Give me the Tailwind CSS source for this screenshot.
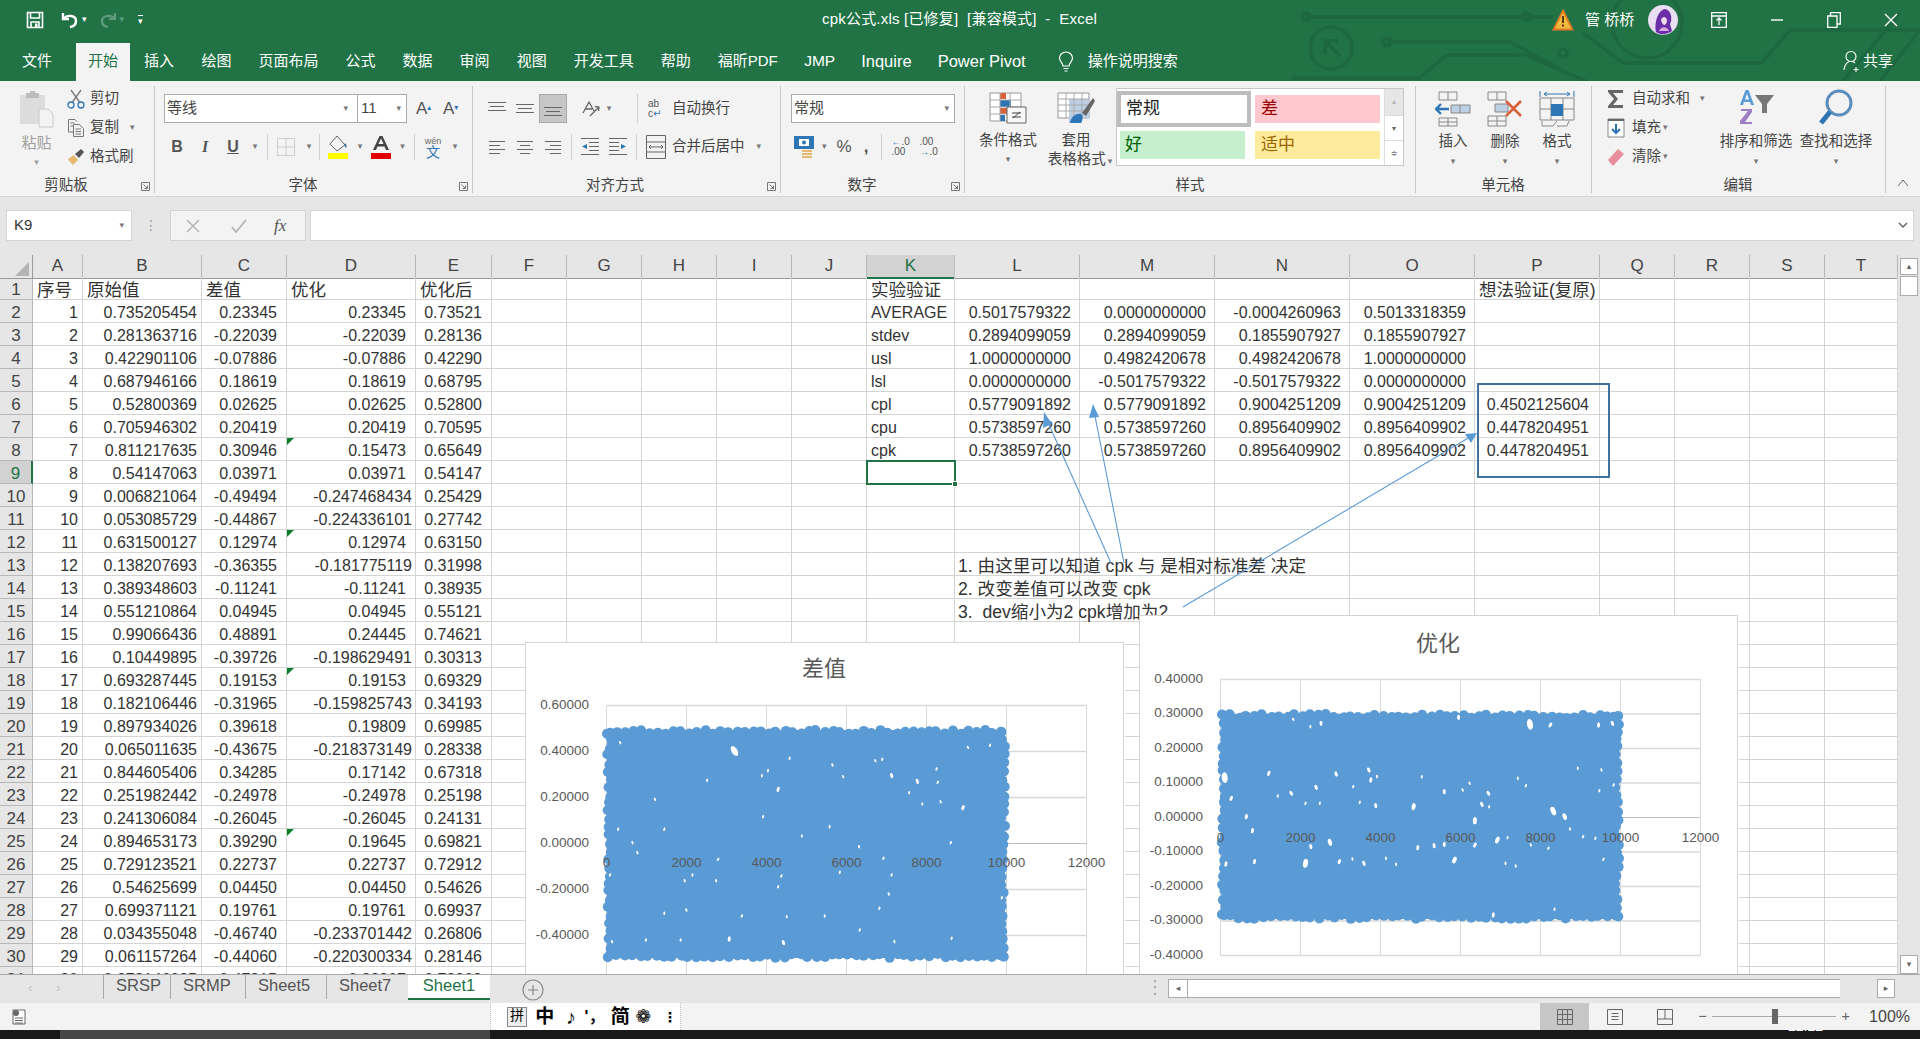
<!DOCTYPE html>
<html lang="zh">
<head>
<meta charset="utf-8"/>
<title>cpk公式.xls - Excel</title>
<script src="https://cdn.jsdelivr.net/npm/@tailwindcss/browser@4"></script>
</head>
<body class="w-[1920px] h-[1039px] overflow-hidden flex flex-col bg-[#e6e6e6] text-[#333] text-[14.5px] font-['Liberation_Sans','Noto_Sans_CJK_SC','DejaVu_Sans',sans-serif]">

<!-- title bar + tabs -->
<header class="relative h-[81px] shrink-0 bg-[#217346] text-white flex flex-col">
  <svg class="absolute inset-0" width="1920" height="81" fill="none" stroke="#1d6840" stroke-width="3.5">
    <path d="M1306 17H1553M1387 42H1510L1562 70M1582 32L1623 63H1762L1790 30H1920M1292 78H1419L1447 55H1525L1586 81M1843 81L1900 13M1880 81L1920 30"/>
    <circle cx="1306" cy="17" r="4"/><circle cx="1527" cy="17" r="4"/><circle cx="1387" cy="42" r="4"/><circle cx="1563" cy="53" r="4"/>
    <circle cx="1331" cy="48" r="21"/><path d="M1325 54V41H1338M1325 41L1340 56"/>
    <circle cx="1647" cy="23" r="35"/>
  </svg>
  <div class="relative h-[40px] flex items-center">
    <div class="flex items-center pl-[26px]">
      <svg width="18" height="18" viewBox="0 0 18 18" fill="none" stroke="#fff" stroke-width="1.6"><path d="M1.5 1.5H16.5V16.5H1.5ZM4.5 1.5V7H13.5V1.5M5 16.5V11H13V16.5"/><path d="M9 12.5H11.5V16H9Z" fill="#fff" stroke="none"/></svg>
      <svg class="ml-[17px]" width="18" height="18" viewBox="0 0 18 18" fill="none" stroke="#fff" stroke-width="2.4"><path d="M2 2V8H8M3 7.5C6 3.5 15 4 15 10C15 13 13 15.5 9 16"/></svg>
      <span class="ml-[3px] text-[9px]">▾</span>
      <svg class="ml-[12px]" width="18" height="18" viewBox="0 0 18 18" fill="none" stroke="#5f9d7d" stroke-width="2.2"><path d="M16 2V8H10M15 7.5C12 3.5 3 4 3 10C3 13 5 15.5 9 16"/></svg>
      <span class="ml-[3px] text-[9px] text-[#5f9d7d]">▾</span>
      <span class="ml-[14px] text-[9px] leading-[8px] border-t border-white pt-[1px]">▾</span>
    </div>
    <div class="absolute left-[822px] top-[9px] text-[15px] leading-[20px] whitespace-pre tracking-[0.2px]">cpk公式.xls [已修复]  [兼容模式]  -  Excel</div>
    <div class="ml-auto flex items-center">
      <svg width="22" height="22" viewBox="0 0 22 22"><path d="M11 1.5L20.5 20.5H1.5Z" fill="#f2b93f" stroke="#e07b24" stroke-width="1.8"/><path d="M10 7H12V14H10ZM10 15.5H12V17.5H10Z" fill="#5a3a10"/></svg>
      <span class="ml-[11px] w-[52px] text-[15px] whitespace-pre">管 桥桥</span>
      <svg class="ml-[11px]" width="30" height="30" viewBox="0 0 30 30"><circle cx="15" cy="15" r="15" fill="#e9def2"/><path d="M8 27C6 18 10 5 17 4C23 5 25 14 22 19L24 26C18 30 12 30 8 27Z" fill="#6b2fa8"/><path d="M13 15C14 11 18 11 19 15C19 20 15 23 13 15Z" fill="#f1dcea"/><path d="M11 26C13 21 19 21 21 26Z" fill="#d9a9e4"/></svg>
      <svg class="ml-[33px]" width="16" height="16" viewBox="0 0 16 16" fill="none" stroke="#fff" stroke-width="1.3"><path d="M.7 .7H15.3V15.3H.7ZM.7 4H15.3M8 13V6.5M5.5 8.5L8 6L10.5 8.5"/></svg>
      <svg class="ml-[43px]" width="14" height="14" viewBox="0 0 14 14" stroke="#fff" stroke-width="1.4"><path d="M1 7H13"/></svg>
      <svg class="ml-[43px]" width="14" height="16" viewBox="0 0 14 16" fill="none" stroke="#fff" stroke-width="1.3"><path d="M.7 4H10V15.3H.7ZM3.5 4V.7H13.3V12H10"/></svg>
      <svg class="ml-[43px] mr-[22px]" width="14" height="14" viewBox="0 0 14 14" stroke="#fff" stroke-width="1.4"><path d="M1 1L13 13M13 1L1 13"/></svg>
    </div>
  </div>
  <nav class="relative h-[41px] flex items-end text-[15px] pl-[8px]">
    <a class="h-[38px] flex items-center pb-[2px] px-[14px]">文件</a>
    <a class="h-[38px] flex items-center pb-[2px] px-[12px] ml-[10px] bg-[#f3f3f3] text-[#217346]">开始</a>
    <a class="h-[38px] flex items-center pb-[2px] px-[14px]">插入</a>
    <a class="h-[38px] flex items-center pb-[2px] px-[13.5px]">绘图</a>
    <a class="h-[38px] flex items-center pb-[2px] px-[13.5px]">页面布局</a>
    <a class="h-[38px] flex items-center pb-[2px] px-[13.5px]">公式</a>
    <a class="h-[38px] flex items-center pb-[2px] px-[13.5px]">数据</a>
    <a class="h-[38px] flex items-center pb-[2px] px-[13.5px]">审阅</a>
    <a class="h-[38px] flex items-center pb-[2px] px-[13.5px]">视图</a>
    <a class="h-[38px] flex items-center pb-[2px] px-[13.5px]">开发工具</a>
    <a class="h-[38px] flex items-center pb-[2px] px-[13.5px]">帮助</a>
    <a class="h-[38px] flex items-center pb-[2px] px-[13.5px]">福昕PDF</a>
    <a class="h-[38px] flex items-center pb-[2px] px-[13px] text-[15.5px]">JMP</a>
    <a class="h-[38px] flex items-center pb-[2px] px-[13px] text-[16.5px]">Inquire</a>
    <a class="h-[38px] flex items-center pb-[2px] px-[13px] text-[16.5px]">Power Pivot</a>
    <svg class="ml-[19px] mb-[8px]" width="16" height="22" viewBox="0 0 16 22" fill="none" stroke="#fff" stroke-width="1.2"><path d="M5 15C5 12 1.5 10.500 1.500 7C1.500 3.500 4.500 1 8 1C11.500 1 14.500 3.500 14.500 7C14.500 10.500 11 12 11 15ZM5.500 17.500H10.500M6.500 20H9.500"/></svg>
    <a class="h-[38px] flex items-center pb-[2px] ml-[14px]">操作说明搜索</a>
    <div class="ml-auto h-[38px] flex items-center pb-[2px] pr-[27px]">
      <svg width="19" height="22" viewBox="0 0 19 22" fill="none" stroke="#fff" stroke-width="1.1"><circle cx="8" cy="6.500" r="5"/><path d="M1 20C1.500 15 4 12.500 6 11.500M10 11.500L12 13M13 17V22M10.500 19.500H15.500"/></svg>
      <span class="ml-[1px]">共享</span>
    </div>
  </nav>
</header>

<!-- ribbon -->
<section class="h-[116px] shrink-0 bg-[#f3f3f3] border-b border-[#d6d6d6] flex items-start pt-[5px] text-[#444]">

  <!-- clipboard -->
  <div class="w-[155px] h-[107px] border-r border-[#c6c6c6] flex flex-col">
    <div class="h-[93px] flex">
      <div class="w-[67px] pl-[6px] flex flex-col items-center text-[#a0a0a0]">
        <svg class="mt-[4px]" width="36" height="38" viewBox="0 0 36 38"><path d="M1 5H26V34H1Z" fill="#dcdcdc"/><path d="M7 3H20V8H7Z" fill="#bdbdbd"/><path d="M11 1H16V4H11Z" fill="#bdbdbd"/><path d="M20 19H29L34 24V37H20Z" fill="#f3f3f3" stroke="#c8c8c8"/></svg>
        <span class="mt-[5px] text-[15px] leading-[20px]">粘贴</span>
        <span class="mt-[3px] text-[9px]">▾</span>
      </div>
      <div class="flex flex-col -mt-[2px]">
        <div class="h-[29px] flex items-center">
          <svg width="18" height="20" viewBox="0 0 18 20" fill="none" stroke="#777" stroke-width="1.3"><path d="M4 1L12.500 13M14 1L5.500 13"/><circle cx="4" cy="16" r="3" stroke="#2e75b6"/><circle cx="14" cy="16" r="3" stroke="#2e75b6"/></svg>
          <span class="ml-[5px]">剪切</span>
        </div>
        <div class="h-[29px] flex items-center">
          <svg width="18" height="20" viewBox="0 0 18 20" fill="none" stroke="#777"><path d="M1.500 1.500H8L10 3.500M1.500 1.500V14H6M3.500 5H7.500M3.500 8H6M6.500 6.500H12L16.500 10.500V18.500H6.500ZM8.500 11H14M8.500 13.500H14M8.500 16H14"/></svg>
          <span class="ml-[5px]">复制</span>
          <span class="ml-[11px] text-[9px] text-[#777]">▾</span>
        </div>
        <div class="h-[29px] flex items-center">
          <svg width="18" height="18" viewBox="0 0 18 18"><path d="M1 11L7 7L11 12L6 17C4 15 2 13 1 11Z" fill="#e6b96f"/><path d="M8 6L14 1L17 4L12 10Z" fill="#555"/></svg>
          <span class="ml-[5px]">格式刷</span>
        </div>
      </div>
    </div>
    <div class="h-[15px] flex items-center"><span class="w-[132px] text-center">剪贴板</span><svg class="ml-[9px] mt-[2px]" width="9" height="9" viewBox="0 0 9 9" fill="none" stroke="#777"><path d="M.5 8.500V.5H8.500V8.500ZM2.500 2.500L6.500 6.500M6.500 3.500V6.500H3.500"/></svg></div>
  </div>

  <!-- font -->
  <div class="w-[318px] h-[107px] border-r border-[#c6c6c6] flex flex-col">
    <div class="h-[93px] pt-[8px] pl-[9px]">
      <div class="flex h-[29px] items-center">
        <div class="w-[194px] h-[29px] bg-white border border-[#ababab] flex items-center pl-[2px] pr-[9px] text-[15px]">等线<span class="ml-auto text-[9px] text-[#777]">▾</span></div>
        <div class="w-[49px] h-[29px] bg-white border border-l-0 border-[#ababab] flex items-center pl-[3px] pr-[5px] text-[15px]">11<span class="ml-auto text-[9px] text-[#777]">▾</span></div>
        <span class="ml-[9px] w-[24px] text-[17px] text-[#555]">A<sup class="text-[8px] text-[#2e75b6]">▴</sup></span>
        <span class="ml-[3px] w-[24px] text-[17px] text-[#555]">A<sup class="text-[8px] text-[#2e75b6]">▾</sup></span>
      </div>
      <div class="flex h-[28px] items-center mt-[10px] text-[#555]">
        <span class="w-[26px] text-center font-bold text-[16px]">B</span>
        <span class="w-[30px] text-center italic font-bold text-[16px] font-['Liberation_Serif']">I</span>
        <span class="w-[26px] text-center font-bold text-[16px] underline">U</span>
        <span class="w-[18px] text-center text-[9px] text-[#777]">▾</span>
        <span class="ml-[3px] w-px h-[26px] bg-[#d0d0d0]"></span>
        <span class="w-[36px] flex justify-center"><svg width="18" height="18" viewBox="0 0 18 18" fill="none" stroke="#aaa" stroke-dasharray="1 1"><path d="M.5 .5H17.500V17.500H.5ZM9 .5V17.500M.5 9H17.500"/></svg></span>
        <span class="w-[10px] text-center text-[9px] text-[#777]">▾</span>
        <span class="ml-[5px] w-px h-[26px] bg-[#d0d0d0]"></span>
        <span class="w-[36px] flex justify-center"><svg width="22" height="24" viewBox="0 0 22 24"><path d="M10 1L18 10L10 16L3 9Z" fill="#f3f3f3" stroke="#666"/><path d="M18 8C20 10 20 12 19 13C18 12 17 10 18 8Z" fill="#2e75b6"/><path d="M1 18H21V24H1Z" fill="#ffff00"/></svg></span>
        <span class="w-[8px] text-center text-[9px] text-[#777]">▾</span>
        <span class="w-[34px] flex justify-center"><svg width="22" height="24" viewBox="0 0 22 24"><path d="M3 15L9.500 1H12.500L19 15H16L14.500 11.500H7.500L6 15ZM8.500 9H13.500L11 3.500Z" fill="#444" fill-rule="evenodd"/><path d="M1 18H21V24H1Z" fill="#e00000"/></svg></span>
        <span class="w-[9px] text-center text-[9px] text-[#777]">▾</span>
        <span class="ml-[7px] w-px h-[26px] bg-[#d0d0d0]"></span>
        <span class="w-[36px] flex flex-col items-center leading-[11px] text-[#2e75b6]"><span class="text-[9px] text-[#666]">wén</span><span class="text-[14px]">文</span></span>
        <span class="w-[8px] text-center text-[9px] text-[#777]">▾</span>
      </div>
    </div>
    <div class="h-[15px] flex items-center"><span class="w-[296px] text-center">字体</span><svg class="ml-[8px] mt-[2px]" width="9" height="9" viewBox="0 0 9 9" fill="none" stroke="#777"><path d="M.5 8.500V.5H8.500V8.500ZM2.500 2.500L6.500 6.500M6.500 3.500V6.500H3.500"/></svg></div>
  </div>

  <!-- alignment -->
  <div class="w-[308px] h-[107px] border-r border-[#c6c6c6] flex flex-col">
    <div class="h-[93px] pt-[8px] pl-[10px]">
      <div class="flex h-[29px] items-center">
        <span class="w-[28px] flex justify-center"><svg width="18" height="14" viewBox="0 0 18 14" stroke="#666"><path d="M0 .5H18M2 4.500H16M0 8.500H18"/></svg></span>
        <span class="w-[28px] flex justify-center"><svg width="18" height="14" viewBox="0 0 18 14" stroke="#666"><path d="M0 2.500H18M2 6.500H16M0 10.500H18"/></svg></span>
        <span class="w-[28px] h-[29px] bg-[#c6c6c6] border border-[#a8a8a8] flex items-center justify-center"><svg width="18" height="14" viewBox="0 0 18 14" stroke="#666"><path d="M0 5.500H18M2 9.500H16M0 13.500H18"/></svg></span>
        <span class="ml-[10px] w-[28px] flex justify-center"><svg width="20" height="20" viewBox="0 0 20 20" fill="none" stroke="#666" stroke-width="1.3"><path d="M2 14L8 3L13 12M4.500 10H11M9 17L17 9M14 7.500L18 8L17.500 12"/></svg></span>
        <span class="w-[8px] text-center text-[9px] text-[#777]">▾</span>
        <span class="ml-[24px] w-px h-[29px] bg-[#d0d0d0]"></span>
        <span class="ml-[10px] w-[18px] text-[10px] leading-[10px] text-[#555]">ab<br/>c<span class="text-[#2e75b6]">↵</span></span>
        <span class="ml-[6px]">自动换行</span>
      </div>
      <div class="flex h-[28px] items-center mt-[10px]">
        <span class="w-[28px] flex justify-center"><svg width="16" height="14" viewBox="0 0 16 14" stroke="#666"><path d="M0 1.500H16M0 5.500H11M0 9.500H16M0 13.500H11"/></svg></span>
        <span class="w-[28px] flex justify-center"><svg width="16" height="14" viewBox="0 0 16 14" stroke="#666"><path d="M0 1.500H16M3 5.500H13M0 9.500H16M3 13.500H13"/></svg></span>
        <span class="w-[28px] flex justify-center"><svg width="16" height="14" viewBox="0 0 16 14" stroke="#666"><path d="M0 1.500H16M5 5.500H16M0 9.500H16M5 13.500H16"/></svg></span>
        <span class="ml-[4px] w-px h-[26px] bg-[#d0d0d0]"></span>
        <span class="w-[36px] flex justify-center"><svg width="20" height="18" viewBox="0 0 20 18" stroke="#666" fill="none"><path d="M1 .5H19M9 4.500H19M9 8.500H19M9 12.500H19M1 16.500H19"/><path d="M7 6L2 8.500L7 11Z" fill="#2e75b6" stroke="none"/></svg></span>
        <span class="w-[20px] flex justify-center"><svg width="20" height="18" viewBox="0 0 20 18" stroke="#666" fill="none"><path d="M1 .5H19M1 4.500H11M1 8.500H11M1 12.500H11M1 16.500H19"/><path d="M13 6L18 8.500L13 11Z" fill="#2e75b6" stroke="none"/></svg></span>
        <span class="ml-[8px] w-px h-[26px] bg-[#d0d0d0]"></span>
        <span class="ml-[9px] w-[20px]"><svg width="20" height="24" viewBox="0 0 20 24" stroke="#666" fill="none"><path d="M.5 .5H19.500V23.500H.5ZM.5 7H19.500M.5 17H19.500M3 12H17M5 10L3 12L5 14M15 10L17 12L15 14"/></svg></span>
        <span class="ml-[6px]">合并后居中</span>
        <span class="ml-[12px] text-[9px] text-[#777]">▾</span>
      </div>
    </div>
    <div class="h-[15px] flex items-center"><span class="w-[284px] text-center">对齐方式</span><svg class="ml-[10px] mt-[2px]" width="9" height="9" viewBox="0 0 9 9" fill="none" stroke="#777"><path d="M.5 8.500V.5H8.500V8.500ZM2.500 2.500L6.500 6.500M6.500 3.500V6.500H3.500"/></svg></div>
  </div>

  <!-- number -->
  <div class="w-[184px] h-[107px] border-r border-[#c6c6c6] flex flex-col">
    <div class="h-[93px] pt-[8px] pl-[10px]">
      <div class="w-[164px] h-[29px] bg-white border border-[#ababab] flex items-center pl-[2px] pr-[5px] text-[15px]">常规<span class="ml-auto text-[9px] text-[#777]">▾</span></div>
      <div class="flex h-[28px] items-center mt-[10px]">
        <svg class="ml-[3px]" width="20" height="22" viewBox="0 0 20 22"><path d="M0 0H20V13H0Z" fill="#2e75b6"/><path d="M5 3H15V10H5Z" fill="#fff"/><circle cx="10" cy="6.500" r="2" fill="#2e75b6"/><path d="M8 14H18V16H8ZM8 17H18V19H8ZM8 20H18V22H8Z" fill="#e6b96f"/></svg>
        <span class="ml-[8px] text-[9px] text-[#777]">▾</span>
        <span class="ml-[10px] text-[17px] text-[#555]">%</span>
        <span class="ml-[12px] text-[17px] font-bold text-[#555]">,</span>
        <span class="ml-[13px] w-px h-[26px] bg-[#d0d0d0]"></span>
        <span class="ml-[9px] w-[16px] text-[10px] leading-[10px] text-[#555]"><span class="text-[#2e75b6]">←</span>.0<br/>.00</span>
        <span class="ml-[12px] w-[16px] text-[10px] leading-[10px] text-[#555]">.00<br/><span class="text-[#2e75b6]">→</span>.0</span>
      </div>
    </div>
    <div class="h-[15px] flex items-center"><span class="w-[162px] text-center">数字</span><svg class="ml-[8px] mt-[2px]" width="9" height="9" viewBox="0 0 9 9" fill="none" stroke="#777"><path d="M.5 8.500V.5H8.500V8.500ZM2.500 2.500L6.500 6.500M6.500 3.500V6.500H3.500"/></svg></div>
  </div>

  <!-- styles -->
  <div class="w-[451px] h-[107px] border-r border-[#c6c6c6] flex flex-col">
    <div class="h-[93px] flex pl-[13px]">
      <div class="w-[60px] flex flex-col items-center">
        <svg class="mt-[6px]" width="38" height="32" viewBox="0 0 38 32"><path d="M1 1H32V29H1Z" fill="#fff" stroke="#999"/><path d="M11 1H17V7H11Z" fill="#d8623a"/><path d="M11 8H22V15H11Z" fill="#2e75b6"/><path d="M11 16H19V22H11Z" fill="#d8623a"/><path d="M11 23H16V29H11Z" fill="#2e75b6"/><path d="M1 8H32M1 15H32M1 22H32M11 1V29M21 1V29" stroke="#aaa" fill="none"/><path d="M18 15H37V31H18Z" fill="#f7f7f7" stroke="#666"/><path d="M24 26L31 20M23 21H32M23 25H32" stroke="#444" fill="none"/></svg>
        <span class="mt-[6px] leading-[20px] whitespace-nowrap">条件格式</span>
        <span class="mt-[3px] text-[9px] text-[#777]">▾</span>
      </div>
      <div class="w-[76px] flex flex-col items-center">
        <svg class="mt-[6px]" width="38" height="32" viewBox="0 0 38 32"><path d="M1 1H32V26H1Z" fill="#fff" stroke="#999"/><path d="M12 7H32V26H18L12 32Z" fill="#bccfe3"/><path d="M1 7H32M1 13H32M1 19H32M9 1V26M17 1V26M25 1V26" stroke="#aaa" fill="none"/><path d="M25 21L36 6L38 9L29 24Z" fill="#666"/><path d="M13 31C14 24 20 21 24 22C27 24 25 30 24 31Z" fill="#2e75b6"/></svg>
        <span class="mt-[6px] leading-[20px]">套用</span>
        <span class="-mr-[8px] leading-[18px] whitespace-nowrap">表格格式<span class="ml-[2px] text-[9px] text-[#777]">▾</span></span>
      </div>
      <div class="ml-[2px] mt-[2px] w-[288px] h-[78px] bg-white border border-[#c6c6c6] flex">
        <div class="w-[267px] grid grid-cols-[134px_125px] gap-x-[4px] content-start pt-[2px] text-[17px]">
          <div class="h-[36px] border-[4px] border-[#bdbdbd] bg-white flex items-center pl-[5px] text-[#222]">常规</div>
          <div class="h-[28px] mt-[4px] bg-[#ffc7ce] text-[#9c0006] flex items-center pl-[6px]">差</div>
          <div class="h-[28px] mt-[4px] ml-[3px] w-[125px] bg-[#c6efce] text-[#006100] flex items-center pl-[5px]">好</div>
          <div class="h-[28px] mt-[4px] bg-[#ffeb9c] text-[#9c6500] flex items-center pl-[6px]">适中</div>
        </div>
        <div class="ml-auto w-[19px] flex flex-col border-l border-[#dcdcdc] text-[8px] text-center leading-[26px]">
          <span class="h-[26px] bg-[#e6e6e6] text-[#b5b5b5]">▴</span>
          <span class="h-[26px] border-y border-[#dcdcdc] text-[#666]">▾</span>
          <span class="h-[24px] text-[#666]">≑</span>
        </div>
      </div>
    </div>
    <div class="h-[15px] flex items-center"><span class="w-[450px] text-center">样式</span></div>
  </div>

  <!-- cells -->
  <div class="w-[176px] h-[107px] border-r border-[#c6c6c6] flex flex-col">
    <div class="h-[93px] flex pl-[11px]">
      <div class="w-[52px] flex flex-col items-center">
        <svg class="mt-[5px]" width="36" height="36" viewBox="0 0 36 36" fill="none" stroke="#888"><path d="M4 1H22V9H4ZM13 1V9M4 27H22V35H4ZM13 27V35M4 31H22"/><path d="M16 14H35V22H16ZM25 14V22" fill="#bccfe3"/><path d="M1 18H14M6 13L1 18L6 23" stroke="#2e75b6" stroke-width="2.400"/></svg>
        <span class="mt-[4px] leading-[20px]">插入</span>
        <span class="mt-[4px] text-[9px] text-[#777]">▾</span>
      </div>
      <div class="w-[52px] flex flex-col items-center">
        <svg class="mt-[5px]" width="36" height="36" viewBox="0 0 36 36" fill="none" stroke="#888"><path d="M1 1H19V9H1ZM10 1V9M1 25H19V35H1ZM10 25V35M1 30H19"/><path d="M8 13H21V21H8Z" fill="#bccfe3"/><path d="M19 10L34 25M34 10L19 25" stroke="#d8623a" stroke-width="2.600"/></svg>
        <span class="mt-[4px] leading-[20px]">删除</span>
        <span class="mt-[4px] text-[9px] text-[#777]">▾</span>
      </div>
      <div class="w-[52px] flex flex-col items-center">
        <svg class="mt-[5px]" width="36" height="36" viewBox="0 0 36 36" fill="none" stroke="#888"><path d="M1 7H35V29H1ZM12 7V29M24 7V29M1 18H35"/><path d="M12 13H24V25H12Z" fill="#2e75b6" stroke="none"/><path d="M5 3H31M8 1L5 3L8 5M28 1L31 3L28 5" stroke="#2e75b6"/><path d="M1 0V6M35 0V6" stroke="#2e75b6"/><path d="M3 30V35H14L18 30M18 35H28L30 30" /></svg>
        <span class="mt-[4px] leading-[20px]">格式</span>
        <span class="mt-[4px] text-[9px] text-[#777]">▾</span>
      </div>
    </div>
    <div class="h-[15px] flex items-center"><span class="w-[174px] text-center">单元格</span></div>
  </div>

  <!-- editing -->
  <div class="w-[294px] h-[107px] border-r border-[#c6c6c6] flex flex-col">
    <div class="h-[93px] flex">
      <div class="w-[126px] flex flex-col -mt-[2px] pl-[15px]">
        <div class="h-[29px] flex items-center"><svg width="18" height="20" viewBox="0 0 18 20" fill="#666"><path d="M1 1H16V4H6L11 10L6 16H16V19H1V17L7 10L1 3Z"/></svg><span class="ml-[7px]">自动求和</span><span class="ml-[10px] text-[9px] text-[#777]">▾</span></div>
        <div class="h-[29px] flex items-center"><svg width="18" height="20" viewBox="0 0 18 20" fill="none"><path d="M1 1H17V19H1Z" fill="#fff" stroke="#888"/><path d="M1 1H17V3H1Z" fill="#666"/><path d="M9 6V15M5 11L9 15L13 11" stroke="#2e75b6" stroke-width="2"/></svg><span class="ml-[7px]">填充</span><span class="ml-[2px] text-[9px] text-[#777]">▾</span></div>
        <div class="h-[29px] flex items-center"><svg width="18" height="20" viewBox="0 0 18 20"><path d="M1 13L11 2L17 7L6 19Z" fill="#e88e9c"/></svg><span class="ml-[7px]">清除</span><span class="ml-[2px] text-[9px] text-[#777]">▾</span></div>
      </div>
      <div class="w-[76px] flex flex-col items-center">
        <svg class="mt-[3px]" width="38" height="36" viewBox="0 0 38 36"><path d="M3 16L8.500 1H11.500L17 16H14L13 13H7L6 16ZM8 10.500H12L10 4.500Z" fill="#5b9bd5" fill-rule="evenodd"/><path d="M4 20H15V23L8 33H15V35H3V32L11 22H4Z" fill="#9d7ec4"/><path d="M18 6H37L30 15V24H25V15Z" fill="#777"/></svg>
        <span class="mt-[6px] leading-[20px] whitespace-nowrap">排序和筛选</span>
        <span class="mt-[4px] text-[9px] text-[#777]">▾</span>
      </div>
      <div class="ml-[4px] w-[76px] flex flex-col items-center">
        <svg class="mt-[2px]" width="36" height="38" viewBox="0 0 36 38" fill="none"><circle cx="21" cy="15" r="12" stroke="#5b8dbd" stroke-width="3"/><path d="M12 24L3 35" stroke="#2e75b6" stroke-width="5"/></svg>
        <span class="mt-[5px] leading-[20px] whitespace-nowrap">查找和选择</span>
        <span class="mt-[4px] text-[9px] text-[#777]">▾</span>
      </div>
    </div>
    <div class="h-[15px] flex items-center"><span class="w-[292px] text-center">编辑</span></div>
  </div>
  <div class="ml-[11px] mt-[93px]"><svg width="12" height="8" viewBox="0 0 12 8" fill="none" stroke="#666"><path d="M1 7L6 1L11 7"/></svg></div>
</section>

<!-- formula bar -->
<section class="h-[58px] shrink-0 bg-[#e6e6e6] flex items-start pt-[13px] pl-[6px]">
  <div class="w-[126px] h-[31px] bg-white border border-[#d4d4d4] flex items-center pl-[7px] pr-[7px] text-[15px]">K9<span class="ml-auto text-[9px] text-[#777]">▾</span></div>
  <div class="w-[38px] h-[31px] flex items-center justify-center text-[#9a9a9a] text-[14px]">⋮</div>
  <div class="w-[136px] h-[31px] bg-[#f3f3f3] border border-[#d4d4d4] flex items-center">
    <svg class="ml-[15px]" width="14" height="14" viewBox="0 0 14 14" stroke="#b5b5b5" stroke-width="1.500"><path d="M1 1L13 13M13 1L1 13"/></svg>
    <svg class="ml-[31px]" width="16" height="14" viewBox="0 0 16 14" fill="none" stroke="#b5b5b5" stroke-width="1.800"><path d="M1 8L5 13L15 1"/></svg>
    <span class="ml-[27px] italic font-['Liberation_Serif'] text-[17px] text-[#555]">fx</span>
  </div>
  <div class="ml-[4px] w-[1604px] h-[31px] bg-white border border-[#d4d4d4] flex items-center justify-end pr-[5px]"><svg width="10" height="7" viewBox="0 0 10 7" fill="none" stroke="#666" stroke-width="1.500"><path d="M1 1L5 5L9 1"/></svg></div>
</section>

<!-- sheet -->
<section class="h-[719px] shrink-0 flex overflow-hidden bg-white">
  <div id="sheet" class="relative w-[1898px] h-[719px] overflow-hidden">
    <div id="cells"></div>

    <!-- selected cell -->
    <div class="absolute left-[866px] top-[205px] w-[90px] h-[25px] border-2 border-[#217346]">
      <span class="absolute -right-[4px] -bottom-[4px] w-[6px] h-[6px] bg-[#217346] border border-white"></span>
    </div>

    <!-- text box -->
    <div class="absolute left-[958px] top-[300px] text-[17.6px] leading-[23px] text-[#333]">
      <div class="whitespace-pre">1. 由这里可以知道 cpk 与 是相对标准差 决定</div>
      <div class="whitespace-pre">2. 改变差值可以改变 cpk</div>
      <div class="whitespace-pre">3.  dev缩小为2 cpk增加为2</div>
    </div>

    <!-- box + arrows -->
    <div class="absolute left-[1477px] top-[128px] w-[133px] h-[95px] border-2 border-[#41719c]"></div>
    <svg class="absolute inset-0" width="1898" height="719" viewBox="0 255 1898 719" fill="none" stroke="#5b9bd5" stroke-width="1.100">
      <path d="M1111 563L1046 418M1124 563L1094 411M1183 607L1470 437"/>
      <path d="M1044 412L1052 424L1043 428Z M1093 404L1099 417L1089 418Z M1477 433L1471 443L1465 434Z" fill="#5b9bd5" stroke="none"/>
    </svg>

    <!-- charts -->
    <div class="absolute left-[525px] top-[387px] w-[600px] h-[332px] bg-white"><svg id="chart1" width="600" height="332" viewBox="525 642 600 332"></svg></div>
    <div class="absolute left-[1139px] top-[360px] w-[600px] h-[359px] bg-white"><svg id="chart2" width="600" height="359" viewBox="1139 615 600 359"></svg></div>
  </div>
  <!-- vertical scrollbar -->
  <div class="w-[22px] h-[719px] bg-[#e6e6e6] flex flex-col items-center">
    <div class="mt-[3px] w-[18px] h-[17px] bg-white border border-[#ababab] text-[9px] text-center leading-[14px] text-[#666]">▴</div>
    <div class="mt-[1px] w-[18px] h-[20px] bg-white border border-[#ababab]"></div>
    <div class="mt-auto w-[18px] h-[19px] bg-white border border-[#ababab] text-[9px] text-center leading-[16px] text-[#666]">▾</div>
  </div>
</section>

<!-- sheet tabs -->
<section class="h-[29px] shrink-0 bg-[#e6e6e6] border-t border-[#a8a8a8] flex items-start text-[16.5px] text-[#555]">
  <span class="ml-[28px] mt-[3px] w-[6px] text-[13px] text-[#c0c0c0]">‹</span>
  <span class="ml-[22px] mt-[3px] w-[6px] text-[13px] text-[#c0c0c0]">›</span>
  <div class="ml-[41px] w-[67px] h-[24px] border-l border-[#a8a8a8] pl-[12px] leading-[20px]">SRSP</div>
  <div class="w-[75px] h-[24px] border-l border-[#a8a8a8] pl-[12px] leading-[20px]">SRMP</div>
  <div class="w-[81px] h-[24px] border-l border-[#a8a8a8] pl-[12px] leading-[20px]">Sheet5</div>
  <div class="w-[82px] h-[24px] border-l border-[#a8a8a8] pl-[12px] leading-[20px]">Sheet7</div>
  <div class="h-[25px] w-[82px] bg-white border-b-2 border-[#217346] text-center leading-[20px] text-[#217346]">Sheet1</div>
  <svg class="ml-[32px] mt-[4px]" width="22" height="22" viewBox="0 0 22 22" fill="none" stroke="#888" stroke-width="1.200"><circle cx="11" cy="11" r="10"/><path d="M11 6V16M6 11H16"/></svg>
  <span class="ml-[602px] mt-[2px] w-[8px] text-[#a8a8a8] text-[18px] leading-[20px]">⋮</span>
  <div class="ml-[14px] mt-[4px] flex h-[19px]">
    <div class="w-[20px] bg-white border border-[#ababab] text-[9px] text-center leading-[16px] text-[#666]">◂</div>
    <div class="w-[652px] bg-white border-y border-[#ababab]"></div>
    <div class="w-[37px]"></div>
    <div class="w-[18px] bg-white border border-[#ababab] text-[9px] text-center leading-[16px] text-[#666]">▸</div>
  </div>
</section>

<!-- status bar -->
<section class="relative h-[27px] shrink-0 bg-[#f3f3f3] flex items-center">
  <svg class="ml-[12px]" width="14" height="16" viewBox="0 0 14 16"><path d="M1 1H13V15H1Z" fill="#fff" stroke="#666"/><path d="M3 9H11M3 11.500H11M3 14H11" stroke="#666"/><circle cx="4" cy="4" r="3" fill="#666"/></svg>
  <div class="absolute left-[490px] top-0 w-[191px] h-[27px] bg-white flex items-center text-black font-bold text-[19px] leading-none pl-[16px] border-x border-dotted border-[#bbb]">
    <span class="w-[20px] h-[20px] border border-[#888] bg-[#eee] text-[14px] font-normal text-center">拼</span>
    <span class="ml-[4px] w-[28px] text-center">中</span>
    <span class="w-[24px] text-center text-[20px]">♪</span>
    <span class="w-[24px] text-center text-[16px]">'，</span>
    <span class="w-[28px] text-center">简</span>
    <span class="w-[18px] text-center">❁</span>
    <span class="ml-[8px] w-[20px] text-center text-[14px]">⋮</span>
  </div>
  <div class="ml-auto flex items-center h-[27px]">
    <div class="w-[49px] h-[27px] bg-[#c6c6c6] flex items-center justify-center"><svg width="16" height="16" viewBox="0 0 16 16" fill="none" stroke="#666"><path d="M.5 .5H15.500V15.500H.5ZM5.500 .5V15.500M10.500 .5V15.500M.5 5.500H15.500M.5 10.500H15.500"/></svg></div>
    <svg class="ml-[18px]" width="16" height="16" viewBox="0 0 16 16" fill="none" stroke="#666"><path d="M.5 .5H15.500V15.500H.5ZM4.500 4.500H11.500M4.500 7.500H11.500M4.500 10.500H11.500"/></svg>
    <svg class="ml-[34px]" width="16" height="16" viewBox="0 0 16 16" fill="none" stroke="#666"><path d="M.5 .5H15.500V15.500H.5ZM8 .5V10H.5M8 10H15.500"/></svg>
    <span class="ml-[25px] text-[#666]">−</span>
    <div class="ml-[5px] relative w-[124px] h-px bg-[#aaa]"><span class="absolute left-[60px] -top-[7px] w-[6px] h-[15px] bg-[#666]"></span></div>
    <span class="ml-[6px] text-[#666]">+</span>
    <span class="ml-[19px] mr-[10px] text-[16px] text-[#444]">100%</span>
  </div>
</section>

<!-- taskbar sliver -->
<footer class="h-[9px] shrink-0 bg-[#1a1a1a] flex overflow-hidden">
  <div class="ml-[60px] w-[430px] bg-[#464646]"></div>
  <span class="ml-[1298px] -mt-[13px] text-white text-[14px] leading-[18px]">22:22</span>
</footer>

<script>
  // sheet data
  const rows = [
    [1,"0.735205454","0.23345","0.23345","0.73521"],[2,"0.281363716","-0.22039","-0.22039","0.28136"],
    [3,"0.422901106","-0.07886","-0.07886","0.42290"],[4,"0.687946166","0.18619","0.18619","0.68795"],
    [5,"0.52800369","0.02625","0.02625","0.52800"],[6,"0.705946302","0.20419","0.20419","0.70595"],
    [7,"0.811217635","0.30946","0.15473","0.65649"],[8,"0.54147063","0.03971","0.03971","0.54147"],
    [9,"0.006821064","-0.49494","-0.247468434","0.25429"],[10,"0.053085729","-0.44867","-0.224336101","0.27742"],
    [11,"0.631500127","0.12974","0.12974","0.63150"],[12,"0.138207693","-0.36355","-0.181775119","0.31998"],
    [13,"0.389348603","-0.11241","-0.11241","0.38935"],[14,"0.551210864","0.04945","0.04945","0.55121"],
    [15,"0.99066436","0.48891","0.24445","0.74621"],[16,"0.10449895","-0.39726","-0.198629491","0.30313"],
    [17,"0.693287445","0.19153","0.19153","0.69329"],[18,"0.182106446","-0.31965","-0.159825743","0.34193"],
    [19,"0.897934026","0.39618","0.19809","0.69985"],[20,"0.065011635","-0.43675","-0.218373149","0.28338"],
    [21,"0.844605406","0.34285","0.17142","0.67318"],[22,"0.251982442","-0.24978","-0.24978","0.25198"],
    [23,"0.241306084","-0.26045","-0.26045","0.24131"],[24,"0.894653173","0.39290","0.19645","0.69821"],
    [25,"0.729123521","0.22737","0.22737","0.72912"],[26,"0.54625699","0.04450","0.04450","0.54626"],
    [27,"0.699371121","0.19761","0.19761","0.69937"],[28,"0.034355048","-0.46740","-0.233701442","0.26806"],
    [29,"0.061157264","-0.44060","-0.220300334","0.28146"],[30,"0.978146085","0.47815","0.23907","0.73908"]
  ];
  const kRows = {
    2:["AVERAGE","0.5017579322","0.0000000000","-0.0004260963","0.5013318359",""],
    3:["stdev","0.2894099059","0.2894099059","0.1855907927","0.1855907927",""],
    4:["usl","1.0000000000","0.4982420678","0.4982420678","1.0000000000",""],
    5:["lsl","0.0000000000","-0.5017579322","-0.5017579322","0.0000000000",""],
    6:["cpl","0.5779091892","0.5779091892","0.9004251209","0.9004251209","0.4502125604"],
    7:["cpu","0.5738597260","0.5738597260","0.8956409902","0.8956409902","0.4478204951"],
    8:["cpk","0.5738597260","0.5738597260","0.8956409902","0.8956409902","0.4478204951"]
  };
  const gridRow = "grid grid-cols-[33px_50px_119px_85px_129px_76px_75px_75px_75px_75px_75px_88px_125px_135px_135px_125px_125px_75px_75px_75px_73px]";
  const cellBase = "h-[23px] border-r border-b border-[#d4d4d4] whitespace-nowrap text-[16px] leading-[26px] text-[#333]";
  const warnRows = [8, 12, 18, 25];

  function right(text, pad) { return `<div class="${cellBase} text-right ${pad}">${text}</div>`; }
  function left(text, big) {
    return `<div class="${cellBase} pl-[4px] ${big ? "text-[17.5px]" : "text-[15.5px]"}">${text}</div>`;
  }
  function blank(n) { let s = ""; for (let i = 0; i < n; i++) s += `<div class="${cellBase}"></div>`; return s; }

  let html = `<div class="${gridRow} h-[22px]"><div class="relative bg-[#e6e6e6] border-r border-b border-[#9b9b9b]"><svg class="absolute right-[3px] bottom-[2px]" width="14" height="14"><path d="M14 0V14H0Z" fill="#b4b4b4"/></svg></div>`;
  "ABCDEFGHIJKLMNOPQRST".split("").forEach((c) => {
    html += c === "K"
      ? `<div class="bg-[#d2d2d2] text-[#217346] border-r border-[#c0c0c0] border-b-2 border-b-[#217346] text-center text-[17px] leading-[22px]">K</div>`
      : `<div class="bg-[#e6e6e6] text-[#444] border-r border-b border-[#b8b8b8] border-b-[#9b9b9b] text-center text-[17px] leading-[22px]">${c}</div>`;
  });
  html += `</div>`;

  for (let r = 1; r <= 31; r++) {
    html += `<div class="${gridRow} h-[23px]">`;
    html += r === 9
      ? `<div class="h-[23px] bg-[#d2d2d2] text-[#217346] border-r-2 border-[#217346] border-b border-b-[#b8b8b8] text-center text-[17px] leading-[26px]">9</div>`
      : `<div class="h-[23px] bg-[#e6e6e6] text-[#444] border-r border-b border-[#b8b8b8] text-center text-[17px] leading-[26px]">${r}</div>`;
    if (r === 1) {
      html += left("序号", true) + left("原始值", true) + left("差值", true) + left("优化", true) + left("优化后", true);
    } else {
      const d = rows[r - 2];
      html += right(d[0], "pr-[4px]") + right(d[1], "pr-[4px]") + right(d[2], "pr-[9px]");
      const tri = warnRows.includes(r) ? `<i class="absolute left-0 top-0 w-0 h-0 border-t-[7px] border-r-[7px] border-t-[#0a7d2c] border-r-transparent"></i>` : "";
      html += `<div class="${cellBase} relative text-right ${d[3].length > 9 ? "pr-[3px]" : "pr-[9px]"}">${tri}${d[3]}</div>`;
      html += right(d[4], "pr-[9px]");
    }
    html += blank(5);
    if (r === 1) {
      html += left("实验验证", true) + blank(4) + left("想法验证(复原)", true);
    } else if (kRows[r]) {
      const k = kRows[r];
      html += left(k[0], false);
      for (let i = 1; i < 5; i++) html += right(k[i], "pr-[8px]");
      html += k[5] ? right(k[5], "pr-[10px]") : blank(1);
    } else {
      html += blank(6);
    }
    html += blank(4) + `</div>`;
  }
  document.getElementById("cells").innerHTML = html;

  // small seeded random so the scatter edge is the same on every run
  let seed = 7;
  function rnd() { seed = (seed * 16807) % 2147483647; return seed / 2147483647; }

  function drawChart(id, c) {
    const font = `font-family="Liberation Sans" font-size="13.5" fill="#595959"`;
    let s = `<rect x="${c.left + .5}" y="${c.top + .5}" width="${c.w - 1}" height="${c.h + 20}" fill="#fff" stroke="#d4d4d4"/>`;
    s += `<text x="${c.titleX}" y="${c.titleY}" text-anchor="middle" font-family="Noto Sans CJK SC" font-size="22" fill="#595959">${c.title}</text>`;
    for (let i = 0; i <= 6; i++) {
      const x = c.x0 + i * 80;
      s += `<path d="M${x} ${c.ys[0]}V${c.ys[c.ys.length - 1]}" stroke="#d9d9d9"/>`;
    }
    c.ys.forEach((y, i) => {
      s += `<path d="M${c.x0} ${y}H${c.x0 + 480}" stroke="${c.labels[i] === "0.00000" ? "#bfbfbf" : "#d9d9d9"}" stroke-width="${c.labels[i] === "0.00000" ? 1 : 1.400}"/>`;
    });
    // the blob of points, rough edge from overlapping dots
    const b = c.blob;
    s += `<rect x="${b[0] + 5}" y="${b[1] + 5}" width="${b[2] - b[0] - 10}" height="${b[3] - b[1] - 10}" fill="#5b9bd5"/>`;
    for (let x = b[0] + 5; x < b[2] - 4; x += 8) {
      s += `<circle cx="${x + rnd() * 3}" cy="${b[1] + 5 + rnd() * 4}" r="5" fill="#5b9bd5"/>`;
      s += `<circle cx="${x + rnd() * 3}" cy="${b[3] - 5 - rnd() * 4}" r="5" fill="#5b9bd5"/>`;
    }
    for (let y = b[1] + 5; y < b[3] - 4; y += 8) {
      s += `<circle cx="${b[0] + 5 + rnd() * 4}" cy="${y + rnd() * 3}" r="5" fill="#5b9bd5"/>`;
      s += `<circle cx="${b[2] - 5 - rnd() * 4}" cy="${y + rnd() * 3}" r="5" fill="#5b9bd5"/>`;
    }
    c.specks.forEach((p) => {
      const x = p[0] / 2.45 + c.zoomX, y = p[1] / 3 + c.zoomY, r = p[2] || 1;
      s += `<ellipse cx="${x}" cy="${y}" rx="${r}" ry="${r * 1.800}" transform="rotate(${rnd() * 60 - 30} ${x} ${y})" fill="#fff"/>`;
    });
    c.labels.forEach((t, i) => {
      s += `<text x="${c.labelX}" y="${c.ys[i] + 3}" text-anchor="end" ${font}>${t}</text>`;
    });
    for (let i = 0; i <= 6; i++) {
      s += `<text x="${c.x0 + i * 80}" y="${c.xLabelY}" text-anchor="middle" ${font}>${i * 2000}</text>`;
    }
    document.getElementById(id).innerHTML = s;
  }

  drawChart("chart1", {
    left: 525, top: 642, w: 599, h: 332, title: "差值", titleX: 824, titleY: 676,
    x0: 606.5, ys: [705.5, 751.5, 797.5, 843.5, 889.5, 935.5, 981.5],
    labels: ["0.60000", "0.40000", "0.20000", "0.00000", "-0.20000", "-0.40000", ""],
    labelX: 589, xLabelY: 867, blob: [602, 725, 1010, 963], zoomX: 510, zoomY: 620,
    specks: [[550,393,3],[270,368],[483,481],[355,538],[265,628],[378,628],[300,668],[312,698],[510,718],[447,765],[428,782],[505,782],[378,880],[432,870],[568,888],[537,957,1.500],[418,960],[670,968,1.500],[678,890],[657,800],[665,768],[617,467],[632,452],[657,508,1.500],[620,590],[685,415],[715,648],[790,435],[816,470],[783,620],[895,422],[912,418],[935,467,1.500],[998,484,1.500],[978,518],[1010,552],[1045,447],[1055,545],[1110,563,1.500],[1122,382],[1176,376],[855,680],[915,715],[808,757],[935,765],[928,822],[905,865],[771,888],[857,930],[942,965],[1080,668],[1205,833],[1082,955],[1048,487],[245,765],[250,965],[333,960]]
  });

  drawChart("chart2", {
    left: 1139, top: 615, w: 599, h: 359, title: "优化", titleX: 1438, titleY: 651,
    x0: 1220.5, ys: [679.5, 714, 748.5, 783, 817.5, 852, 886.5, 921, 955.5],
    labels: ["0.40000", "0.30000", "0.20000", "0.10000", "0.00000", "-0.10000", "-0.20000", "-0.30000", "-0.40000"],
    labelX: 1203, xLabelY: 842, blob: [1216.5, 709, 1624, 924], zoomX: 1130, zoomY: 610,
    specks: [[980,343,3],[1030,345,1.500],[1148,345,1.500],[1182,340,1.500],[468,340,1.500],[442,350],[400,328],[805,322,1.500],[340,490,1.500],[232,503,3],[505,492,1.500],[585,480,1.500],[590,510,1.500],[605,500],[456,532,1.500],[547,530],[395,550,1.500],[248,565,1.500],[362,558],[430,580],[465,580],[285,620,1.500],[563,577],[602,587,1.500],[695,590,2],[770,545,1.500],[878,550,1.500],[815,540],[832,520],[862,583,1.500],[845,632,2],[1037,603,2.500],[1065,620,2],[1078,657],[300,662,1.500],[490,697,2],[443,710,1.500],[235,762,1.500],[305,755,1.500],[430,760,2.500],[513,755,1.500],[573,760,1.500],[545,747],[627,745],[652,763],[705,713,1.500],[745,707,1.500],[770,703,1.500],[900,690,2],[795,750,2],[920,760],[945,768],[1110,680],[1140,685],[1025,715],[982,705],[845,705,1.500],[1160,748],[1040,898],[890,915,1.500],[1150,542],[1185,525],[1155,480],[1097,475],[950,505],[970,527],[715,500],[880,590],[925,683]]
  });
</script>
</body>
</html>
